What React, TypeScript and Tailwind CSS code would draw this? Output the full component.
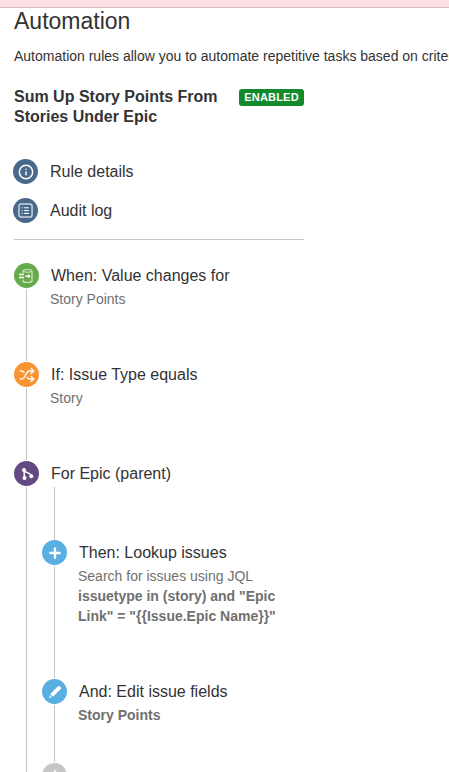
import React from "react";
import { Info, Plus, Shuffle } from "lucide-react";

function AuditIcon() {
  return (
    <svg viewBox="0 0 16 16" className="size-[15px]" fill="none">
      <rect x="1" y="1" width="14" height="14" rx="2.5" stroke="#c9d3df" strokeWidth="1.6" />
      <path d="M6.5 5h5M6.5 8h5M6.5 11h5M4 5h1M4 8h1M4 11h1" stroke="#fff" strokeWidth="1.2" />
    </svg>
  );
}

function TriggerIcon() {
  return (
    <svg viewBox="0 0 18 18" className="size-[18px]" fill="none">
      <path d="M5 6V4.2C5 3 6 2.5 9.5 2.5s4.5.5 4.5 1.7v9.6c0 1.2-1 1.7-4.5 1.7S5 15 5 13.8V12.5" stroke="#d5e8cd" strokeWidth="1.2" />
      <path d="M5.5 4.6c2 .7 6 .7 8 0" stroke="#d5e8cd" strokeWidth="1.1" />
      <path d="M1 7.4h5M1 10.6h5M7.5 9.2h4" stroke="#fff" strokeWidth="1.5" />
      <path d="M10 6.8l2.8 2.4-2.8 2.4z" fill="#fff" />
    </svg>
  );
}

function BranchIcon() {
  return (
    <svg viewBox="0 0 16 16" className="size-[16px]" fill="none">
      <circle cx="5" cy="4" r="2" fill="#fff" />
      <circle cx="5.5" cy="12" r="2" fill="#fff" />
      <circle cx="12.3" cy="10.2" r="2" fill="#fff" />
      <path d="M5 4.5l.5 7.5M5.2 4.5c.8 2.6 6.6 1.8 7.1 5.7" stroke="#fff" strokeWidth="1.5" />
    </svg>
  );
}

function PencilIcon() {
  return (
    <svg viewBox="0 0 16 16" className="size-[16px]">
      <path d="M11 2.2a1.2 1.2 0 0 1 1.7 0l1.1 1.1a1.2 1.2 0 0 1 0 1.7L6 12.8 3.2 10z" fill="#fff" />
      <path d="M2.6 11l2.4 2.4-3 .7z" fill="#d7ecf8" />
    </svg>
  );
}

function Dot({ className, children }: { className: string; children?: React.ReactNode }) {
  return (
    <div className={`flex size-[25px] shrink-0 items-center justify-center rounded-full ${className}`}>
      {children}
    </div>
  );
}

function Step({
  color,
  icon,
  title,
  className,
  children,
}: {
  color: string;
  icon: React.ReactNode;
  title: string;
  className: string;
  children?: React.ReactNode;
}) {
  return (
    <div className={`flex gap-3 ${className}`}>
      <div className="flex w-[25px] shrink-0 flex-col items-center">
        <Dot className={color}>{icon}</Dot>
        <div className="my-px w-px flex-1 bg-[#c6c6c6]" />
      </div>
      <div className="min-w-0">
        <div className="text-[16px] leading-[25px] text-[#333]">{title}</div>
        {children}
      </div>
    </div>
  );
}

function SideLink({ icon, label }: { icon: React.ReactNode; label: string }) {
  return (
    <div className="flex items-center gap-3">
      <Dot className="bg-[#49698c]">{icon}</Dot>
      <span className="text-[16px] leading-[25px] text-[#333]">{label}</span>
    </div>
  );
}

export default function App() {
  return (
    <div className="h-[772px] w-[449px] overflow-hidden bg-white font-['Liberation_Sans',sans-serif]">
      <div className="h-2 border-b border-[#d9bcc2] bg-[#fde0e4]" />

      <div className="pl-[14px]">
        <h1 className="mt-[1px] text-[23px] leading-[24px] text-[#333]">Automation</h1>
        <p className="mt-[13px] whitespace-nowrap text-[14px] leading-[20px] text-[#333]">
          Automation rules allow you to automate repetitive tasks based on criteria
        </p>

        <div className="mt-[21px] flex w-[290px] items-start justify-between">
          <h2 className="w-[215px] text-[16px] leading-[20px] font-bold text-[#333]">
            Sum Up Story Points From Stories Under Epic
          </h2>
          <span className="mt-[2px] flex h-[17px] w-[65px] items-center justify-center rounded-[3px] bg-[#14892c] text-[11px] font-bold tracking-[0.2px] text-white">
            ENABLED
          </span>
        </div>

        <div className="mt-[32px] -ml-px flex flex-col gap-[14px]">
          <SideLink icon={<Info className="size-[16px] text-white" strokeWidth={2.2} />} label="Rule details" />
          <SideLink icon={<AuditIcon />} label="Audit log" />
        </div>

        <div className="mt-[16px] h-px w-[290px] bg-[#c6c6c6]" />

        <div className="mt-[23px]">
          <Step className="h-[99px]" color="bg-[#65ab4b]" icon={<TriggerIcon />} title="When: Value changes for">
            <div className="mt-[1px] -ml-px text-[14px] leading-[20px] text-[#707070]">Story Points</div>
          </Step>
          <Step
            className="h-[99px]"
            color="bg-[#f89432]"
            icon={<Shuffle className="size-[16px] text-white" strokeWidth={2} />}
            title="If: Issue Type equals"
          >
            <div className="mt-[1px] -ml-px text-[14px] leading-[20px] text-[#707070]">Story</div>
          </Step>
          <Step className="h-[26px]" color="bg-[#654982]" icon={<BranchIcon />} title="For Epic (parent)" />

          <div className="ml-3 border-l border-[#c6c6c6] pl-[15px]">
            <div className="ml-3 h-[53px] w-px bg-[#c6c6c6]" />
            <Step
              className="h-[139px]"
              color="bg-[#59afe1]"
              icon={<Plus className="size-[16px] text-white" strokeWidth={3.5} />}
              title="Then: Lookup issues"
            >
              <div className="mt-[1px] w-[205px] -ml-px text-[14px] leading-[20px] text-[#707070]">
                <div>Search for issues using JQL</div>
                <div className="font-bold">
                  issuetype in (story) and "Epic Link" = "{"{{"}Issue.Epic Name{"}}"}"
                </div>
              </div>
            </Step>
            <Step className="h-[84px]" color="bg-[#59afe1]" icon={<PencilIcon />} title="And: Edit issue fields">
              <div className="mt-[1px] -ml-px text-[14px] leading-[20px] font-bold text-[#707070]">Story Points</div>
            </Step>
            <Dot className="bg-[#c6c6c6]">
              <Plus className="size-[16px] text-white" strokeWidth={3.5} />
            </Dot>
          </div>
        </div>
      </div>
    </div>
  );
}
